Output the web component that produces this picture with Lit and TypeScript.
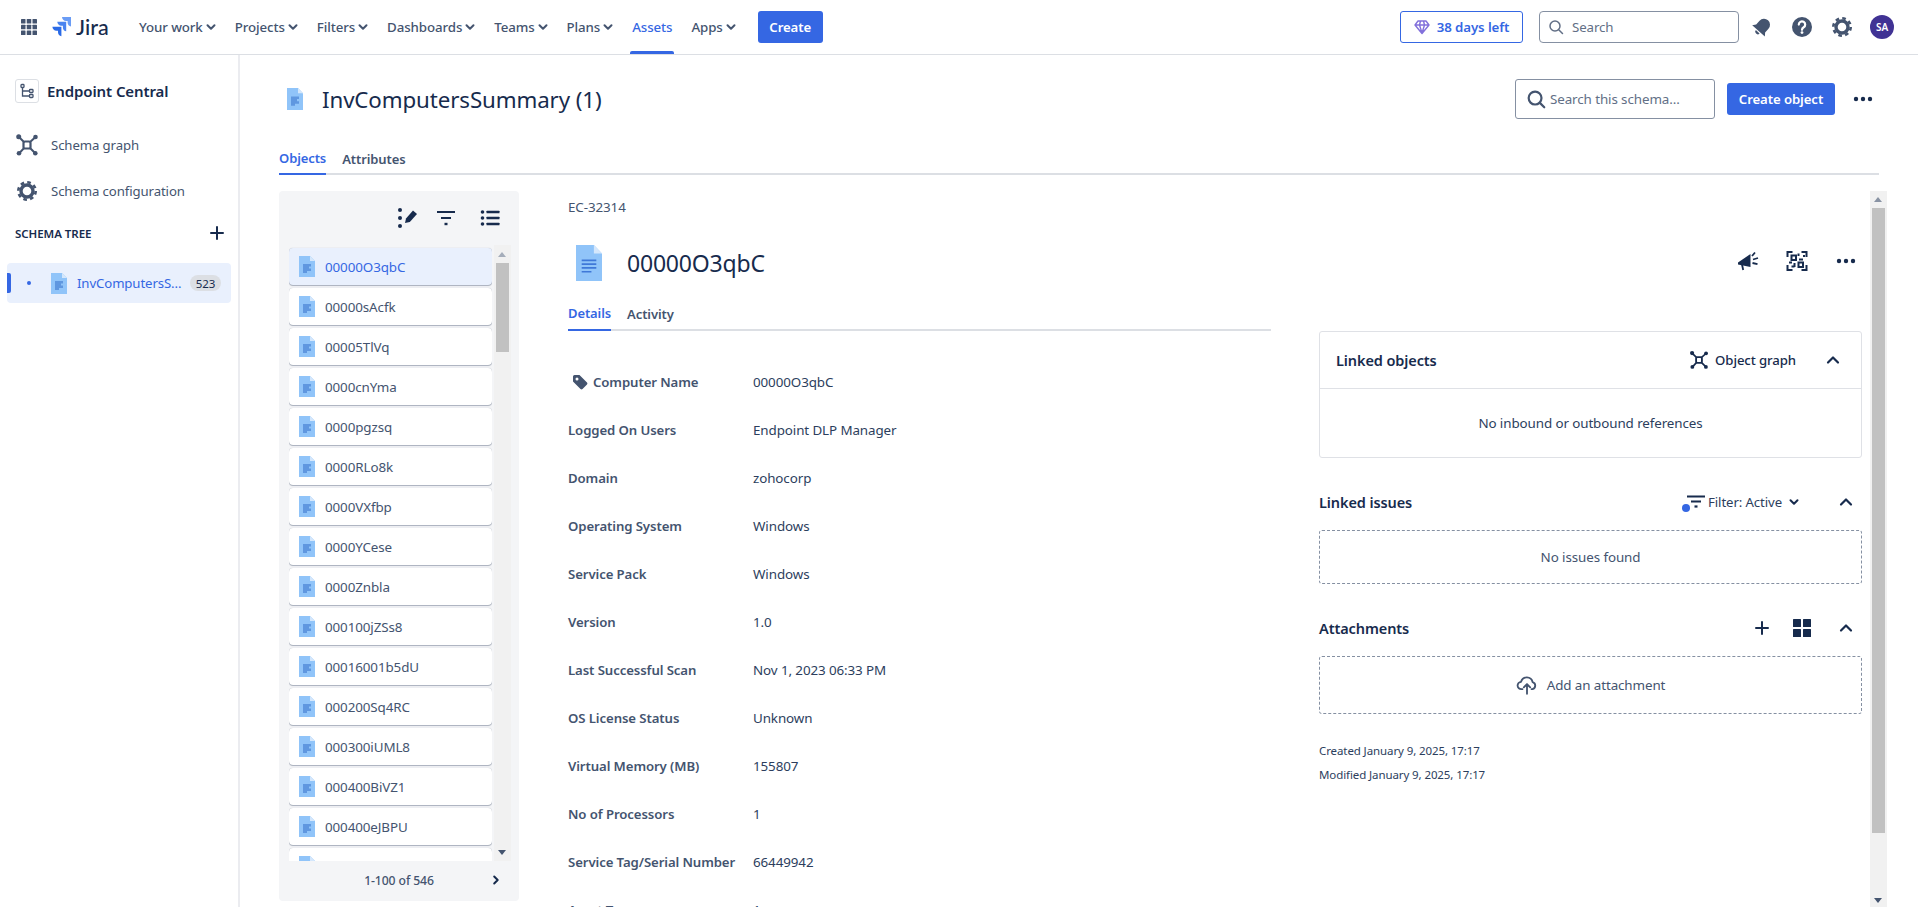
import { LitElement, html, css, svg } from "lit";
import { customElement } from "lit/decorators.js";

const chevDown = (cls = "chev") => html`<svg class=${cls} viewBox="0 0 10 10"><path d="M1.5 3.2 5 6.7l3.5-3.5" fill="none" stroke="currentColor" stroke-width="2" stroke-linecap="round" stroke-linejoin="round"/></svg>`;
const chevUp = html`<svg class="chevup" viewBox="0 0 24 24"><path d="M7 14.5l5-5 5 5" fill="none" stroke="#172b4d" stroke-width="2.2" stroke-linecap="round" stroke-linejoin="round"/></svg>`;
const dots = html`<svg class="i24" viewBox="0 0 24 24" fill="#172b4d"><circle cx="5" cy="12" r="2.2"/><circle cx="12" cy="12" r="2.2"/><circle cx="19" cy="12" r="2.2"/></svg>`;
const gear = (cls: string, color: string) => html`<svg class=${cls} viewBox="0 0 24 24" fill="none" stroke=${color}><circle cx="12" cy="12" r="6" stroke-width="3.4"/><circle cx="12" cy="12" r="8.7" stroke-width="2.6" stroke-dasharray="3.6 3.23"/></svg>`;
const graph = (cls: string, color: string) => html`<svg class=${cls} viewBox="0 0 24 24" fill=${color} stroke=${color}><path d="M4 4l5.2 5.2M20 4.5l-5.2 4.7M4.5 20l4.7-5.2M20 20l-5.2-5.2" stroke-width="2"/><rect x="8.5" y="8.5" width="7" height="7" rx="1.6" fill="none" stroke-width="2.2"/><circle cx="3.7" cy="3.7" r="2.5" stroke="none"/><circle cx="20.5" cy="4" r="2.3" stroke="none"/><circle cx="4" cy="20.3" r="2.3" stroke="none"/><circle cx="20.3" cy="20.3" r="2.3" stroke="none"/></svg>`;
const doc = (big = false) => html`<svg class=${big ? "docbig" : "doc"} viewBox="0 0 16 21" preserveAspectRatio="none">
  <path d="M0 0h11l5 5v16H0z" fill="#90c4f9"/><path d="M11 0l5 5h-5z" fill="#d4e7fc"/>
  ${big
    ? svg`<path d="M3.5 9h9M3.5 11.2h9M3.5 13.4h9M3.5 15.6h6" stroke="#3f78d8" stroke-width="1" fill="none"/>`
    : svg`<path d="M4 8h8v2.4h-2v2.2h2V15H8v2H4z" fill="#5f97e0"/>`}
</svg>`;

const NAV = ["Your work", "Projects", "Filters", "Dashboards", "Teams", "Plans", "Assets", "Apps"];
const ITEMS = ["00000O3qbC", "00000sAcfk", "00005TlVq", "0000cnYma", "0000pgzsq", "0000RLo8k", "0000VXfbp", "0000YCese", "0000Znbla", "000100jZSs8", "00016001b5dU", "000200Sq4RC", "000300iUML8", "000400BiVZ1", "000400eJBPU", ""];
const ROWS: [string, string][] = [
  ["Computer Name", "00000O3qbC"], ["Logged On Users", "Endpoint DLP Manager"], ["Domain", "zohocorp"],
  ["Operating System", "Windows"], ["Service Pack", "Windows"], ["Version", "1.0"],
  ["Last Successful Scan", "Nov 1, 2023 06:33 PM"], ["OS License Status", "Unknown"], ["Virtual Memory (MB)", "155807"],
  ["No of Processors", "1"], ["Service Tag/Serial Number", "66449942"], ["Asset Type", "1"],
];

@customElement("app-root")
export class AppRoot extends LitElement {
  static styles = css`
    :host { display: block; height: 907px; overflow: hidden; background: #fff; color: #172b4d;
      font-family: "Noto Sans", "Open Sans", sans-serif; font-size: 13.4px; letter-spacing: -0.1px; }
    * { box-sizing: border-box; }
    svg { display: block; flex: none; }
    .nav { display: flex; align-items: center; height: 55px; border-bottom: 1px solid #dcdfe4; padding: 0 16px 0 21px; color: #44546f; font-size: 13.3px; }
    .apps { width: 16px; height: 16px; }
    .logo { width: 20px; height: 20px; margin-left: 14px; }
    .jira { font-family: Lato, sans-serif; font-size: 21.5px; font-weight: 500; color: #172b4d; margin-left: 5px; width: 33px; letter-spacing: 0; line-height: 24px; }
    .menu { display: flex; align-items: stretch; height: 54px; margin-left: 30px; gap: 19px; }
    .menu a { display: flex; align-items: center; gap: 3px; font-weight: 500; position: relative; }
    .menu a.on { color: #3567e3; }
    .menu a.on::after { content: ""; position: absolute; left: -2px; right: -2px; bottom: 0; height: 3px; background: #3567e3; border-radius: 2px 2px 0 0; }
    .chev { width: 10px; height: 10px; color: #44546f; }
    .btn { background: #3567e3; color: #fff; font-weight: 600; border-radius: 3px; display: flex; align-items: center; justify-content: center; font-size: 13.2px; }
    .create { width: 65px; height: 32px; margin-left: 22px; }
    .right { margin-left: auto; display: flex; align-items: center; }
    .trial { display: flex; align-items: center; justify-content: center; gap: 7px; width: 123px; height: 32px; border: 1px solid #3567e3; border-radius: 3px; color: #3567e3; font-weight: 600; }
    .search { display: flex; align-items: center; gap: 8px; width: 200px; height: 32px; margin-left: 16px; padding-left: 8px; border: 1px solid #8590a2; border-radius: 4px; color: #626f86; }
    .nicons { display: flex; margin-left: 3px; }
    .nicons > div { width: 40px; height: 32px; display: flex; align-items: center; justify-content: center; }
    .i24 { width: 24px; height: 24px; }
    .avatar { width: 24px; height: 24px; border-radius: 50%; background: #403294; color: #fff; font-size: 10px; font-weight: 600; display: flex; align-items: center; justify-content: center; letter-spacing: 0; }

    .page { display: flex; height: 852px; }
    .side { width: 240px; flex: none; border-right: 2px solid #ebecf0; padding-top: 24px; color: #44546f; }
    .shead { display: flex; align-items: center; height: 24px; padding-left: 15px; gap: 8px; font-size: 15px; font-weight: 600; color: #172b4d; margin-bottom: 19px; }
    .sbox { width: 24px; height: 24px; border: 1px solid #dcdfe4; border-radius: 3px; display: flex; align-items: center; justify-content: center; }
    .slink { display: flex; align-items: center; height: 46px; padding-left: 15px; gap: 12px; font-size: 13.2px; }
    .slink svg { width: 24px; height: 24px; }
    .stree { display: flex; justify-content: space-between; align-items: center; height: 38px; padding: 0 13px 0 15px; font-size: 11.5px; font-weight: 600; color: #172b4d; letter-spacing: -0.05px; }
    .plus { width: 16px; height: 16px; }
    .titem { display: flex; align-items: center; position: relative; width: 224px; height: 40px; margin: 11px 0 0 7px; background: #e9f0fd; border-radius: 4px; color: #3567e3; padding-left: 44px; font-size: 13.2px; }
    .titem::before { content: ""; position: absolute; left: 0; top: 10px; width: 4px; height: 20px; background: #3567e3; border-radius: 0 2px 2px 0; }
    .titem::after { content: ""; position: absolute; left: 20px; top: 18px; width: 4px; height: 4px; background: #3567e3; border-radius: 50%; }
    .doc { width: 16px; height: 21px; }
    .docbig { width: 26px; height: 36px; }
    .tname { margin-left: 10px; width: 113px; white-space: nowrap; }
    .badge { width: 31px; height: 16px; border-radius: 8px; background: #dcdfe4; color: #172b4d; font-size: 11.5px; display: flex; align-items: center; justify-content: center; }

    .main { flex: 1; min-width: 0; padding: 24px 39px 0; }
    .phead { display: flex; align-items: center; height: 40px; }
    .phead .doc { width: 16px; height: 22px; margin-left: 8px; }
    .phead h1 { font-size: 22.3px; font-weight: 400; margin: 0 0 0 19px; letter-spacing: -0.1px; }
    .ssearch { margin-left: auto; display: flex; align-items: center; gap: 3px; width: 200px; height: 40px; padding-left: 9px; border: 1px solid #8590a2; border-radius: 3px; color: #626f86; }
    .cobj { width: 108px; height: 32px; margin-left: 12px; }
    .pdots { margin: 0 4px 0 16px; }
    .tabs { display: flex; gap: 16px; height: 32px; border-bottom: 2px solid #dcdfe4; color: #44546f; font-weight: 600; font-size: 13px; }
    .ptabs { margin-top: 24px; }
    .tab { display: flex; align-items: center; height: 32px; }
    .tab.on { color: #3567e3; border-bottom: 2px solid #3567e3; }
    .body { display: flex; margin: 16px -8px 0 0; height: 716px; }
    .panel { width: 240px; height: 710px; flex: none; background: #f4f5f7; border-radius: 4px; display: flex; flex-direction: column; }
    .ptools { height: 55px; flex: none; display: flex; align-items: center; justify-content: flex-end; padding: 0 17px 0 0; gap: 20px; margin-top: -1px; }
    .ptools svg { width: 24px; height: 24px; }
    .ptools .eicon { margin-right: -6px; }
    .lwrap { display: flex; height: 616px; padding-left: 10px; flex: none; }
    .list { width: 203px; overflow: hidden; padding-top: 3px; display: flex; flex-direction: column; gap: 3px; flex: none; }
    .item { height: 37px; flex: none; background: #fff; border-radius: 4px; box-shadow: 0 1px 1px rgba(9,30,66,.3), 0 0 1px rgba(9,30,66,.3); display: flex; align-items: center; gap: 10px; padding-left: 10px; color: #44546f; }
    .item.on { background: #e9f0fd; color: #3567e3; }
    .lbar { width: 17px; margin-left: 2px; background: #f1f1f1; position: relative; flex: none; }
    .thumb { position: absolute; left: 2px; top: 18px; width: 13px; height: 89px; background: #c1c1c1; }
    .up, .down { position: absolute; left: 4px; width: 0; height: 0; border-left: 4.5px solid transparent; border-right: 4.5px solid transparent; }
    .lbar .up { top: 7px; border-bottom: 5px solid #a5adba; }
    .lbar .down { bottom: 6px; border-top: 5px solid #44546f; }
    .pfoot { height: 39px; display: flex; align-items: center; justify-content: center; position: relative; color: #44546f; font-weight: 500; font-size: 12.2px; }
    .pnext { position: absolute; left: 212px; top: 14px; width: 10px; height: 10px; transform: rotate(-90deg); color: #172b4d; }

    .detail { flex: 1; min-width: 0; padding: 6px 8px 0 49px; height: 716px; overflow: hidden; }
    .key { height: 20px; line-height: 20px; color: #44546f; }
    .dtitle { display: flex; align-items: center; height: 48px; margin-top: 22px; padding-left: 8px; }
    .dtitle h2 { font-size: 23px; font-weight: 400; margin: 0 0 0 25px; letter-spacing: -0.2px; }
    .dicons { margin-left: auto; display: flex; gap: 25px; margin-right: 4px; align-self: flex-start; margin-top: 10px; }
    .cols { display: flex; gap: 48px; margin-top: 10px; }
    .left { width: 703px; flex: none; }
    .dtabs { height: 34px; }
    .dtabs .tab { height: 34px; }
    .grid { display: grid; grid-template-columns: 185px 1fr; grid-auto-rows: 47.94px; align-items: center; margin-top: 27.5px; color: #2c3e5d; }
    .lab { font-weight: 600; color: #44546f; display: flex; align-items: center; gap: 5px; white-space: nowrap; font-size: 13.2px; }
    .lab.tag { padding-left: 4px; }
    .tagi { width: 16px; height: 16px; }
    .rcol { flex: 1; min-width: 0; padding-top: 34px; }
    .lo { border: 1px solid #dfe1e6; border-radius: 3px; height: 127px; }
    .lohead { display: flex; align-items: center; height: 57px; border-bottom: 1px solid #dfe1e6; padding: 0 16px; font-size: 14.5px; font-weight: 600; }
    .ograph { margin-left: auto; display: flex; align-items: center; gap: 6px; font-size: 13.2px; font-weight: 500; }
    .ograph svg { width: 20px; height: 20px; }
    .chevup { width: 24px; height: 24px; }
    .lohead .chevup { margin-left: 25px; }
    .lobody { height: 68px; display: flex; align-items: center; justify-content: center; color: #2c3e5d; }
    .sec { display: flex; align-items: center; height: 32px; font-size: 14.5px; font-weight: 600; padding-right: 4px; }
    .sec.li { margin-top: 28px; }
    .sec.at { margin-top: 28px; }
    .sectools { margin-left: auto; display: flex; align-items: center; font-size: 13.2px; font-weight: 400; color: #2c3e5d; }
    .fil { position: relative; width: 20px; height: 14px; margin-right: 3px; }
    .fil svg { width: 18px; height: 14px; position: absolute; right: 0; top: 0; }
    .fdot { position: absolute; left: -3px; top: 9px; width: 8px; height: 8px; background: #3567e3; border-radius: 50%; }
    .sectools .chev { margin: 0 35px 0 7px; color: #172b4d; }
    .grid4 { width: 18px; height: 18px; margin: 0 23px 0 23px; }
    .dash { border: 1px dashed #8590a2; border-radius: 3px; display: flex; align-items: center; justify-content: center; color: #44546f; }
    .d1 { height: 54px; margin-top: 12px; }
    .d2 { height: 58px; margin-top: 12px; gap: 9px; }
    .d2 svg { width: 22px; height: 22px; }
    .meta { margin-top: 25px; font-size: 11.5px; line-height: 24px; color: #2c3e5d; }
    .vbar { width: 17px; flex: none; background: #f1f1f1; position: relative; }
    .vbar .thumb { top: 17px; height: 625px; }
    .vbar .up { top: 6px; border-bottom: 5px solid #8993a4; }
    .vbar .down { bottom: 4px; border-top: 5px solid #44546f; }
  `;

  render() {
    return html`
      <div class="nav">
        <svg class="apps" viewBox="0 0 16 16" fill="#44546f">${[0, 5.75, 11.5].map((y) => [0, 5.75, 11.5].map((x) => svg`<rect x=${x} y=${y} width="4.5" height="4.5" rx=".6"/>`))}</svg>
        <svg class="logo" viewBox="0 0 20 20"><path d="M20 0H11c0 2.3 1.8 4 4 4h1.6v1.6c0 2.2 1.5 3.6 3.4 3.9z" fill="#6a9cf5"/><path d="M15.2 4.8H6.3c0 2.3 1.8 4 4 4h1.6v1.6c0 2.2 1.5 3.8 3.3 3.9z" fill="#4a84ef"/><path d="M10.4 9.7H1.4c0 2.3 1.8 4 4 4H7v1.6c0 2.2 1.6 3.7 3.4 3.9z" fill="#2a6ae6"/></svg>
        <span class="jira">Jira</span>
        <div class="menu">
          ${NAV.map((n) => n === "Assets" ? html`<a class="on">${n}</a>` : html`<a>${n}${chevDown()}</a>`)}
        </div>
        <div class="btn create">Create</div>
        <div class="right">
          <div class="trial">
            <svg width="16" height="16" viewBox="0 0 16 16" fill="none" stroke="#8270db" stroke-width="1.4" stroke-linejoin="round"><path d="M4 2h8l3 4-7 8.5L1 6zM1 6h14M5.5 6 8 14l2.5-8M5.5 6 6.5 2M10.5 6l-1-4"/></svg>
            38 days left
          </div>
          <div class="search">
            <svg width="16" height="16" viewBox="0 0 16 16" fill="none" stroke="#626f86" stroke-width="1.5" stroke-linecap="round"><circle cx="7" cy="7" r="5"/><path d="M11 11l3.5 3.5"/></svg>
            Search
          </div>
          <div class="nicons">
            <div><svg class="i24" viewBox="0 0 24 24" fill="#44546f"><g transform="rotate(42 12 12)"><path d="M12 3a6 6 0 0 0-6 6v5l-2.5 3.2h17L18 14V9a6 6 0 0 0-6-6z"/><path d="M9.5 18.4h5a2.5 2.5 0 0 1-5 0z"/></g></svg></div>
            <div><svg class="i24" viewBox="0 0 24 24"><circle cx="12" cy="12" r="10" fill="#44546f"/><path d="M8.8 9.6a3.2 3.2 0 1 1 4.9 2.7c-1.1.7-1.7 1.2-1.7 2.5" fill="none" stroke="#fff" stroke-width="2.2" stroke-linecap="round"/><circle cx="12" cy="17.6" r="1.4" fill="#fff"/></svg></div>
            <div>${gear("i24", "#44546f")}</div>
            <div><div class="avatar">SA</div></div>
          </div>
        </div>
      </div>
      <div class="page">
        <aside class="side">
          <div class="shead">
            <div class="sbox"><svg width="16" height="16" viewBox="0 0 16 16" fill="none" stroke="#44546f" stroke-width="1.3"><rect x="2" y="1.5" width="3" height="3" rx=".8"/><rect x="10.5" y="6.5" width="3.5" height="3" rx=".8"/><rect x="10.5" y="11.5" width="3.5" height="3" rx=".8"/><path d="M3.5 4.5V13h7M3.5 8h7"/></svg></div>
            Endpoint Central
          </div>
          <div class="slink">${graph("", "#44546f")}Schema graph</div>
          <div class="slink">${gear("", "#44546f")}Schema configuration</div>
          <div class="stree">SCHEMA TREE
            <svg class="plus" viewBox="0 0 16 16" stroke="#172b4d" stroke-width="2" stroke-linecap="round"><path d="M8 2v12M2 8h12"/></svg>
          </div>
          <div class="titem">${doc()}<span class="tname">InvComputersS...</span><span class="badge">523</span></div>
        </aside>
        <main class="main">
          <div class="phead">
            ${doc()}
            <h1>InvComputersSummary (1)</h1>
            <div class="ssearch">
              <svg width="22" height="22" viewBox="0 0 24 24" fill="none" stroke="#44546f" stroke-width="2.4" stroke-linecap="round"><circle cx="11" cy="11" r="7"/><path d="M16.5 16.5 21 21"/></svg>
              Search this schema...
            </div>
            <div class="btn cobj">Create object</div>
            <div class="pdots">${dots}</div>
          </div>
          <div class="tabs ptabs"><div class="tab on">Objects</div><div class="tab">Attributes</div></div>
          <div class="body">
            <section class="panel">
              <div class="ptools">
                <svg class="eicon" viewBox="0 0 24 24" fill="#172b4d"><circle cx="4" cy="4" r="2"/><circle cx="4" cy="12" r="2"/><circle cx="4" cy="20" r="2"/><path d="M10 12.5l7-8 4 3.4-7.2 8-4.8 1z"/></svg>
                <svg viewBox="0 0 24 24" fill="none" stroke="#172b4d" stroke-width="2"><path d="M3 6h18M7 12h10"/><path d="M10.5 18h3" stroke-width="2.4"/></svg>
                <svg viewBox="0 0 24 24" fill="#172b4d"><circle cx="4.5" cy="6" r="1.8"/><circle cx="4.5" cy="12" r="1.8"/><circle cx="4.5" cy="18" r="1.8"/><rect x="8.5" y="4.7" width="13" height="2.6" rx=".6"/><rect x="8.5" y="10.7" width="13" height="2.6" rx=".6"/><rect x="8.5" y="16.7" width="13" height="2.6" rx=".6"/></svg>
              </div>
              <div class="lwrap">
                <div class="list">
                  ${ITEMS.map((t, i) => html`<div class="item ${i === 0 ? "on" : ""}">${doc()}${t}</div>`)}
                </div>
                <div class="lbar"><div class="up"></div><div class="thumb"></div><div class="down"></div></div>
              </div>
              <div class="pfoot">1-100 of 546 ${chevDown("pnext")}</div>
            </section>
            <section class="detail">
              <div class="key">EC-32314</div>
              <div class="dtitle">
                ${doc(true)}
                <h2>00000O3qbC</h2>
                <div class="dicons">
                  <svg class="i24" viewBox="0 0 24 24" fill="#172b4d"><path d="M2 13.5 14.5 5v13L2 15.5z"/><path d="M6 15.5l1.2 5.5" stroke="#172b4d" stroke-width="1.8" fill="none"/><path d="M16 7l3-3.5M17 10.5l5-1.5M16.5 14l5 1.2" stroke="#172b4d" stroke-width="1.8" fill="none"/></svg>
                  <svg class="i24" viewBox="0 0 24 24" fill="none" stroke="#172b4d" stroke-width="2"><path d="M2.5 8V3h5M16.5 3h5v5M2.5 16v5h5M21.5 16v5h-5"/><rect x="6.5" y="6.5" width="4.5" height="4.5"/><rect x="13.5" y="13.5" width="4.5" height="4.5"/><path d="M13.5 4.5v2.5M18 7h2M14 10.5h4M4 13.5h3M9.5 14v4M6.5 17.5h3"/></svg>
                  ${dots}
                </div>
              </div>
              <div class="cols">
                <div class="left">
                  <div class="tabs dtabs"><div class="tab on">Details</div><div class="tab">Activity</div></div>
                  <div class="grid">
                    ${ROWS.map(([k, v], i) => html`
                      <div class="lab ${i === 0 ? "tag" : ""}">${i === 0 ? html`<svg class="tagi" viewBox="0 0 16 16" fill="#44546f"><path d="M1 2.5A1.5 1.5 0 0 1 2.5 1h5L15 8.5a1.5 1.5 0 0 1 0 2L10.5 15a1.5 1.5 0 0 1-2 0L1 7.5zM5 6.5A1.5 1.5 0 1 0 5 3.5a1.5 1.5 0 0 0 0 3z" fill-rule="evenodd"/></svg>` : ""}${k}</div>
                      <div>${v}</div>`)}
                  </div>
                </div>
                <div class="rcol">
                  <div class="lo">
                    <div class="lohead">Linked objects
                      <div class="ograph">${graph("", "#172b4d")}Object graph</div>
                      ${chevUp}
                    </div>
                    <div class="lobody">No inbound or outbound references</div>
                  </div>
                  <div class="sec li">Linked issues
                    <div class="sectools">
                      <div class="fil"><svg viewBox="0 0 18 14" fill="none" stroke="#172b4d" stroke-width="2"><path d="M0 1.5h18M4 6.5h10"/><path d="M7.5 11.5h3" stroke-width="2.2"/></svg><div class="fdot"></div></div>
                      Filter: Active ${chevDown()}
                      ${chevUp}
                    </div>
                  </div>
                  <div class="dash d1">No issues found</div>
                  <div class="sec at">Attachments
                    <div class="sectools">
                      <svg class="plus" viewBox="0 0 16 16" stroke="#172b4d" stroke-width="2" stroke-linecap="round"><path d="M8 2v12M2 8h12"/></svg>
                      <svg class="grid4" viewBox="0 0 18 18" fill="#172b4d"><rect width="8" height="8" rx=".5"/><rect x="10" width="8" height="8" rx=".5"/><rect y="10" width="8" height="8" rx=".5"/><rect x="10" y="10" width="8" height="8" rx=".5"/></svg>
                      ${chevUp}
                    </div>
                  </div>
                  <div class="dash d2">
                    <svg viewBox="0 0 24 24" fill="none" stroke="#44546f" stroke-width="2" stroke-linecap="round" stroke-linejoin="round"><path d="M7 16.5H6a4 4 0 0 1-.5-8 6.5 6.5 0 0 1 12.6.3A4 4 0 0 1 18 16.5h-1"/><path d="M12 21.5V11M8.5 14.5 12 11l3.5 3.5"/></svg>
                    Add an attachment
                  </div>
                  <div class="meta">Created January 9, 2025, 17:17<br/>Modified January 9, 2025, 17:17</div>
                </div>
              </div>
            </section>
            <div class="vbar"><div class="up"></div><div class="thumb"></div><div class="down"></div></div>
          </div>
        </main>
      </div>
    `;
  }
}
